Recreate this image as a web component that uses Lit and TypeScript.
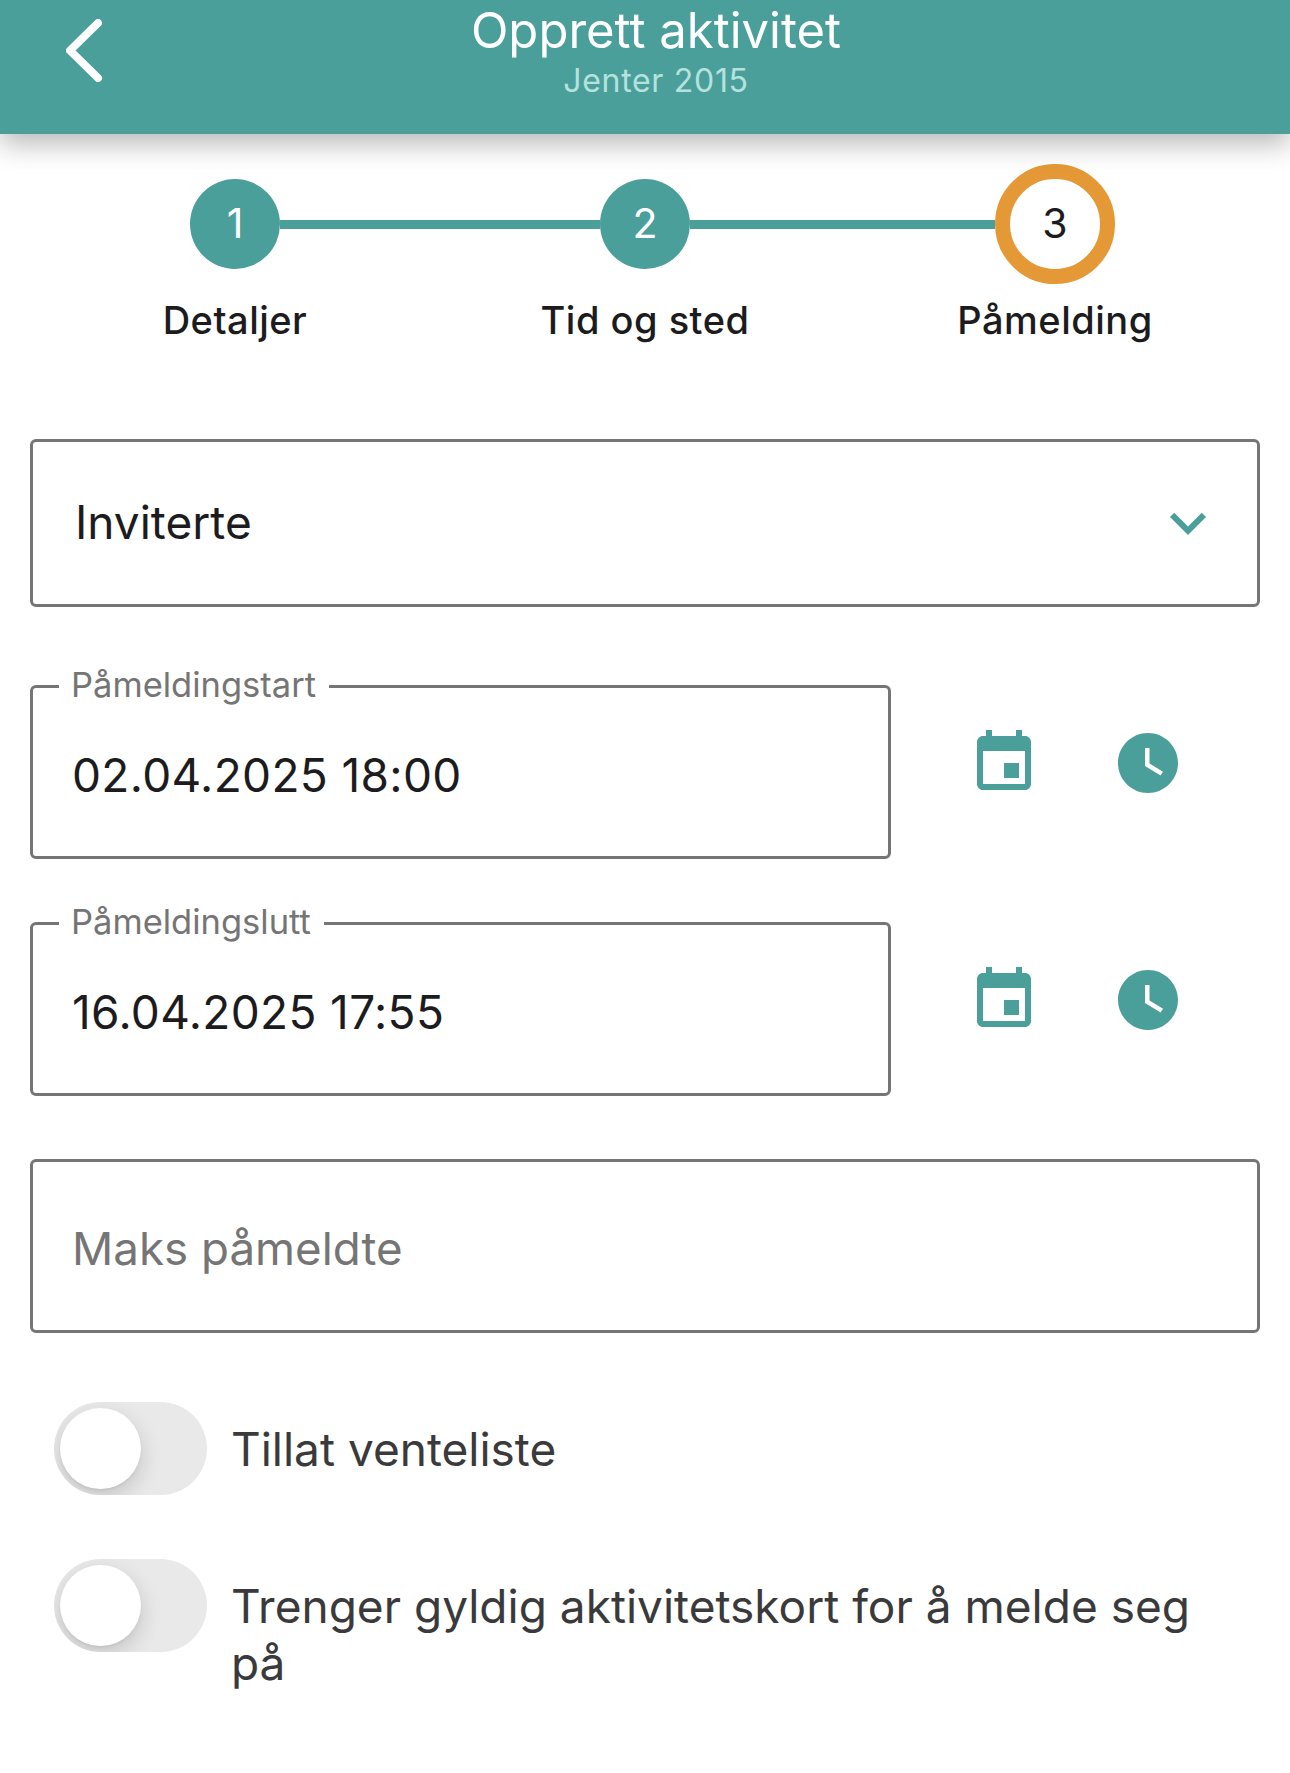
import { LitElement, html, css, svg } from "lit";
import { customElement } from "lit/decorators.js";

const calendar = svg`<path d="M17 12h-5v5h5v-5zM16 1v2H8V1H6v2H5c-1.11 0-1.99.9-1.99 2L3 19c0 1.1.89 2 2 2h14c1.1 0 2-.9 2-2V5c0-1.1-.9-2-2-2h-1V1h-2zm3 18H5V8h14v11z"/>`;
const clock = svg`<path d="M12 2C6.5 2 2 6.5 2 12s4.5 10 10 10 10-4.5 10-10S17.5 2 12 2zm4.2 14.2L11 13V7h1.5v5.2l4.5 2.7-.8 1.3z"/>`;

@customElement("app-root")
export class AppRoot extends LitElement {
  static styles = css`
    :host { display: block; width: 1290px; height: 1773px; overflow: hidden; background: #fff; font-family: Inter, Roboto, sans-serif; color: #1c1c1e; }
    * { box-sizing: border-box; }
    .header { height: 134px; background: #4a9f9b; box-shadow: 0 10px 26px rgba(0,0,0,.28); display: flex; align-items: flex-start; position: relative; }
    .back { width: 108px; padding: 19px 0 0 66px; flex: none; }
    .back svg { display: block; width: 38px; height: 63px; }
    .titles { flex: 1; padding-right: 86px; text-align: center; }
    .title { font-size: 49px; line-height: 58px; color: #fff; margin-top: 2px; }
    .sub { font-size: 32px; line-height: 38px; color: #b6e2de; margin-top: 2px; letter-spacing: .7px; }
    .track { display: flex; align-items: center; height: 120px; margin-top: 30px; padding: 0 175px 0 190px; }
    .dot { width: 90px; height: 90px; border-radius: 50%; background: #4a9f9b; color: #fff; display: flex; align-items: center; justify-content: center; font-size: 41px; padding-bottom: 2px; flex: none; }
    .dot.cur { width: 120px; height: 120px; background: #fff; border: 15px solid #e59936; color: #1c1c1e; }
    .line { flex: 1; height: 9px; background: #4a9f9b; }
    .line.first { flex: none; width: 320px; }
    .labels { display: grid; grid-template-columns: repeat(3, 1fr); padding: 0 30px; margin-top: 13px; text-align: center; font-size: 38px; line-height: 46px; font-weight: 500; letter-spacing: .5px; color: #1c1c1e; }
    .form { padding: 0 30px; }
    .box { border: 3px solid #757575; border-radius: 6px; display: flex; align-items: center; position: relative; }
    .select { height: 168px; margin-top: 96px; padding: 0 33px 0 42px; justify-content: space-between; font-size: 46px; }
    .select span { padding-bottom: 2px; }
    .select svg { width: 72px; height: 72px; fill: #4a9f9b; display: block; }
    .row { display: flex; align-items: flex-start; margin-top: 78px; }
    .row + .row { margin-top: 63px; }
    .row .box { width: 861px; height: 174px; }
    .input { padding: 6px 0 0 39px; font-size: 46px; letter-spacing: .35px; }
    .legend { position: absolute; left: 26px; top: -23px; background: #fff; padding: 0 13px 0 12px; font-size: 34.5px; line-height: 40px; letter-spacing: 0; color: #757575; }
    .icons { display: flex; padding: 42px 0 0 77px; gap: 72px; }
    .icons svg { width: 72px; height: 72px; fill: #4a9f9b; display: block; }
    .plain { height: 174px; margin-top: 63px; padding: 4px 0 0 39px; font-size: 45.7px; color: #757575; }
    .toggle-row { display: flex; gap: 24px; padding: 0 33px 0 24px; font-size: 46px; line-height: 57px; color: #3a3a3c; }
    .t1 { margin-top: 69px; }
    .t2 { margin-top: 64px; }
    .toggle { width: 153px; height: 93px; flex: none; border-radius: 47px; background: #e9e9ea; padding: 6px; overflow: hidden; }
    .knob { width: 81px; height: 81px; border-radius: 50%; background: #fff; box-shadow: 0 8px 22px rgba(0,0,0,.16), 0 2px 3px rgba(0,0,0,.05); }
    .toggle-text { padding-top: 19px; }
  `;

  private dt(label: string, value: string) {
    return html`<div class="row">
      <div class="box input"><span class="legend">${label}</span>${value}</div>
      <div class="icons">
        <svg viewBox="0 0 24 24">${calendar}</svg>
        <svg viewBox="0 0 24 24">${clock}</svg>
      </div>
    </div>`;
  }

  render() {
    return html`
      <div class="header">
        <div class="back"><svg viewBox="0 0 38 63" fill="none" stroke="#fff" stroke-width="8" stroke-linecap="round" stroke-linejoin="round"><path d="M32 4 L4 31.5 L32 59"/></svg></div>
        <div class="titles">
          <div class="title">Opprett aktivitet</div>
          <div class="sub">Jenter 2015</div>
        </div>
      </div>
      <div class="track">
        <div class="dot">1</div><div class="line first"></div>
        <div class="dot">2</div><div class="line"></div>
        <div class="dot cur">3</div>
      </div>
      <div class="labels"><div>Detaljer</div><div>Tid og sted</div><div>Påmelding</div></div>
      <div class="form">
        <div class="box select"><span>Inviterte</span><svg viewBox="0 0 24 24"><path d="M16.59 8.59L12 13.17 7.41 8.59 6 10l6 6 6-6z"/></svg></div>
        ${this.dt("Påmeldingstart", "02.04.2025 18:00")}
        ${this.dt("Påmeldingslutt", "16.04.2025 17:55")}
        <div class="box plain">Maks påmeldte</div>
        <div class="toggle-row t1"><div class="toggle"><div class="knob"></div></div><div class="toggle-text">Tillat venteliste</div></div>
        <div class="toggle-row t2"><div class="toggle"><div class="knob"></div></div><div class="toggle-text">Trenger gyldig aktivitetskort for å melde seg på</div></div>
      </div>
    `;
  }
}
